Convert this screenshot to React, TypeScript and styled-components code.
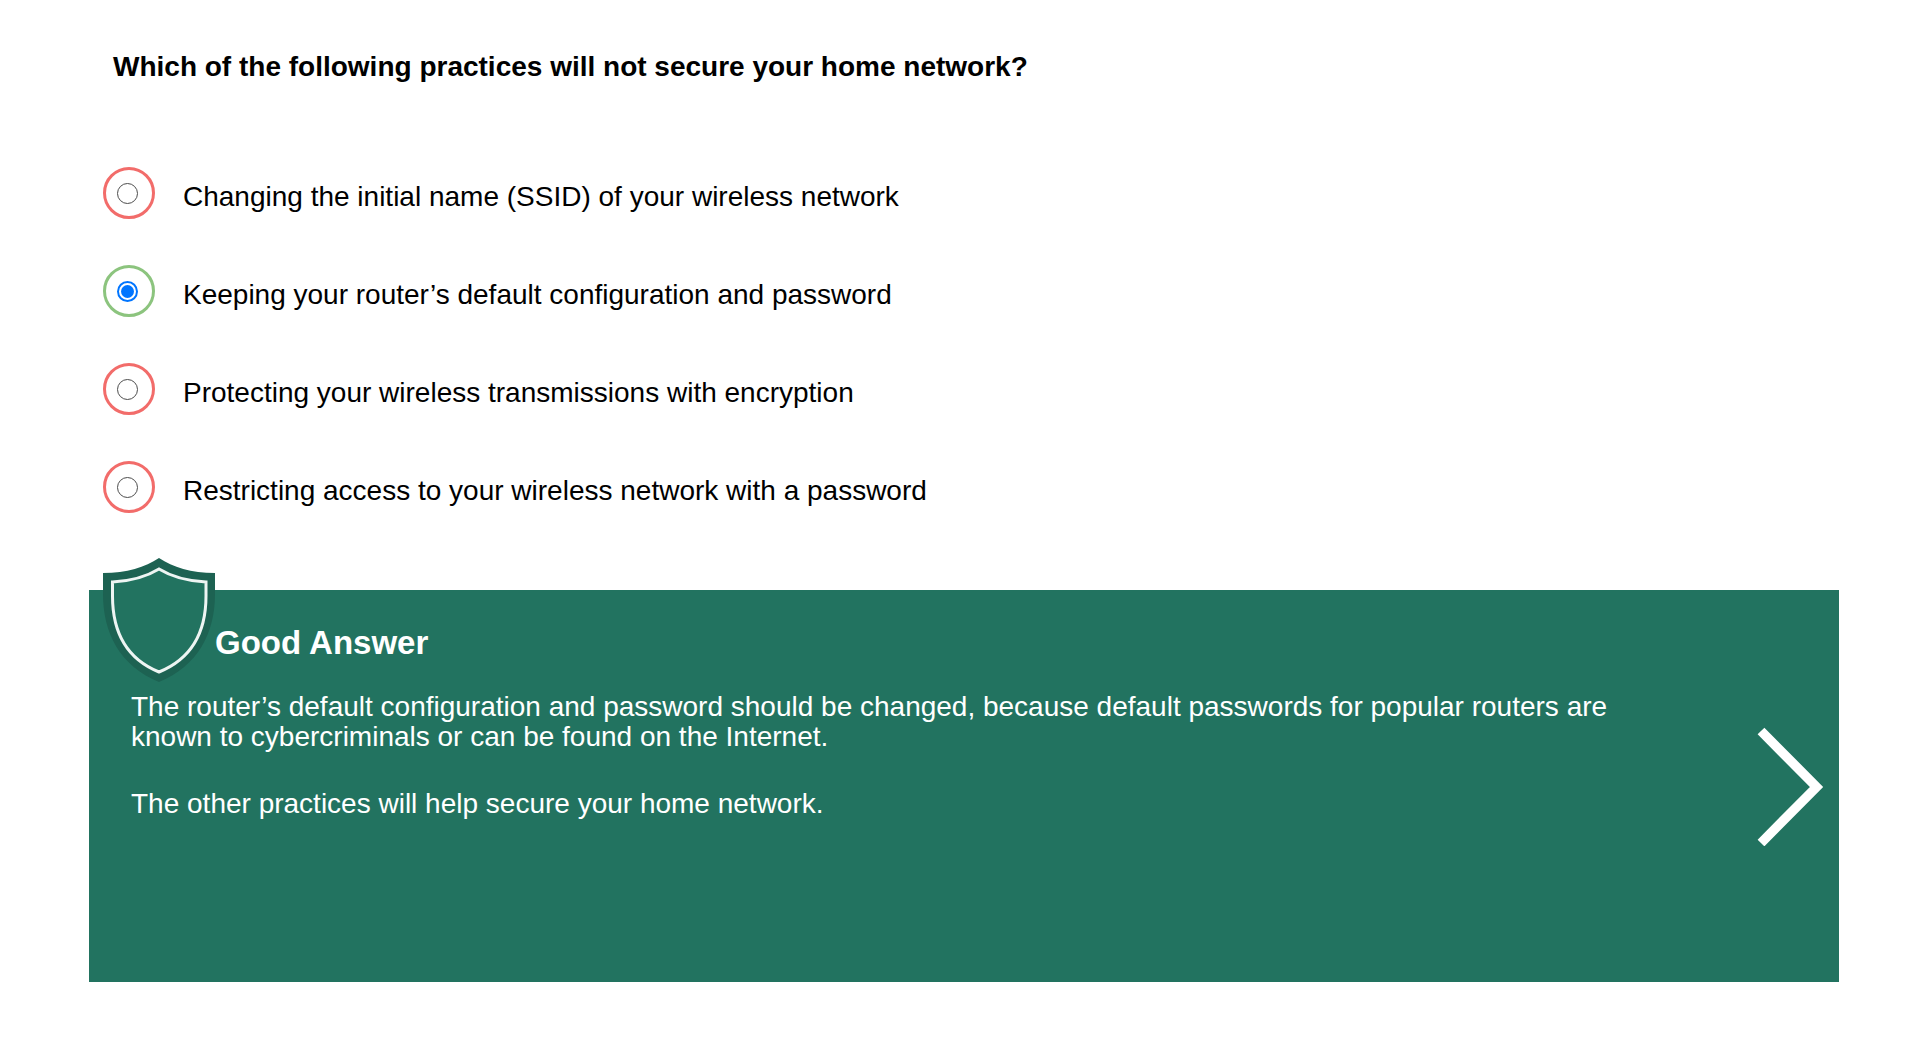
import React, { useState } from 'react';
import styled, { createGlobalStyle } from 'styled-components';

const GlobalStyle = createGlobalStyle`
  *, *::before, *::after { box-sizing: border-box; }
  body {
    margin: 0;
    background: #fff;
    color: #000;
    font: 28px/32px "Liberation Sans", Arial, sans-serif;
  }
`;

const Page = styled.main`
  padding: 51px 71px 60px 89px;
`;

const Quiz = styled.fieldset`
  margin: 0;
  padding: 0;
  border: 0;
  min-width: 0;
`;

const Question = styled.legend`
  padding: 0 24px;
  font-weight: 700;
`;

const Options = styled.div`
  display: grid;
  gap: 46px;
  padding: 84px 14px 0;
`;

const Option = styled.div`
  display: flex;
  align-items: flex-start;
  gap: 28px;
`;

const Ring = styled.span<{ $correct: boolean }>`
  display: flex;
  flex: none;
  align-items: center;
  width: 52px;
  height: 52px;
  padding-left: 11px;
  border: 3px solid ${(p) => (p.$correct ? '#8cc47e' : '#f26c6a')};
  border-radius: 50%;
`;

const Radio = styled.input`
  appearance: none;
  display: grid;
  place-items: center;
  width: 21px;
  height: 21px;
  margin: 0;
  border: 1px solid #4c4c4c;
  border-radius: 50%;
  background: #fff;

  &:checked {
    border: 2px solid #0075ff;
  }

  &:checked::before {
    content: '';
    width: 13px;
    height: 13px;
    border-radius: 50%;
    background: #0075ff;
  }
`;

const OptionLabel = styled.label`
  padding-top: 14px;
`;

const Feedback = styled.section`
  display: flex;
  align-items: flex-start;
  min-height: 392px;
  margin-top: 77px;
  padding: 0 14px;
  background: #227360;
  color: #fff;
`;

const FeedbackBody = styled.div`
  flex: 1;
  min-width: 0;
`;

const FeedbackHeader = styled.header`
  display: flex;
  align-items: flex-end;
  height: 92px;
`;

const ShieldIcon = styled.svg`
  flex: none;
  width: 112px;
  height: 124px;
`;

const FeedbackTitle = styled.h2`
  margin: 0;
  padding-bottom: 20px;
  font-size: 33px;
  line-height: 38px;
`;

const Message = styled.div`
  display: grid;
  gap: 37px;
  padding: 10px 132px 10px 28px;
  line-height: 30px;

  p { margin: 0; }
`;

const NextButton = styled.button`
  flex: none;
  margin-top: 136px;
  padding: 0;
  border: 0;
  background: none;
  color: inherit;
  cursor: pointer;

  svg { display: block; }
`;

const options = [
  { text: 'Changing the initial name (SSID) of your wireless network', correct: false },
  { text: 'Keeping your router’s default configuration and password', correct: true },
  { text: 'Protecting your wireless transmissions with encryption', correct: false },
  { text: 'Restricting access to your wireless network with a password', correct: false },
];

export default function App() {
  const [selected, setSelected] = useState(1);

  return (
    <Page>
      <GlobalStyle />
      <Quiz>
        <Question>Which of the following practices will not secure your home network?</Question>
        <Options>
          {options.map((option, i) => (
            <Option key={option.text}>
              <Ring $correct={option.correct}>
                <Radio
                  type="radio"
                  name="practice"
                  id={`practice-${i}`}
                  checked={selected === i}
                  onChange={() => setSelected(i)}
                />
              </Ring>
              <OptionLabel htmlFor={`practice-${i}`}>{option.text}</OptionLabel>
            </Option>
          ))}
        </Options>
      </Quiz>
      <Feedback>
        <FeedbackBody>
          <FeedbackHeader>
            <ShieldIcon viewBox="0 0 112 124" aria-hidden="true">
              <path
                d="M56 0C42 9 24 15 0 15V36C0 75 17 108 56 124C95 108 112 75 112 36V15C88 15 70 9 56 0Z"
                fill="#1d6252"
              />
              <path
                d="M56 11C43 19 29 23 9.500 24V38C9.500 74 24 101 56 114C88 101 103 74 103 38V24C83 23 69 19 56 11Z"
                fill="#227360"
                stroke="#eef5f3"
                strokeWidth="3"
              />
            </ShieldIcon>
            <FeedbackTitle>Good Answer</FeedbackTitle>
          </FeedbackHeader>
          <Message>
            <p>
              The router’s default configuration and password should be changed, because default
              passwords for popular routers are known to cybercriminals or can be found on the
              Internet.
            </p>
            <p>The other practices will help secure your home network.</p>
          </Message>
        </FeedbackBody>
        <NextButton type="button" aria-label="Next">
          <svg width="68" height="120" viewBox="0 0 68 120" aria-hidden="true">
            <path d="M4 5L59.500 61L4 117" fill="none" stroke="currentColor" strokeWidth="9.500" />
          </svg>
        </NextButton>
      </Feedback>
    </Page>
  );
}
